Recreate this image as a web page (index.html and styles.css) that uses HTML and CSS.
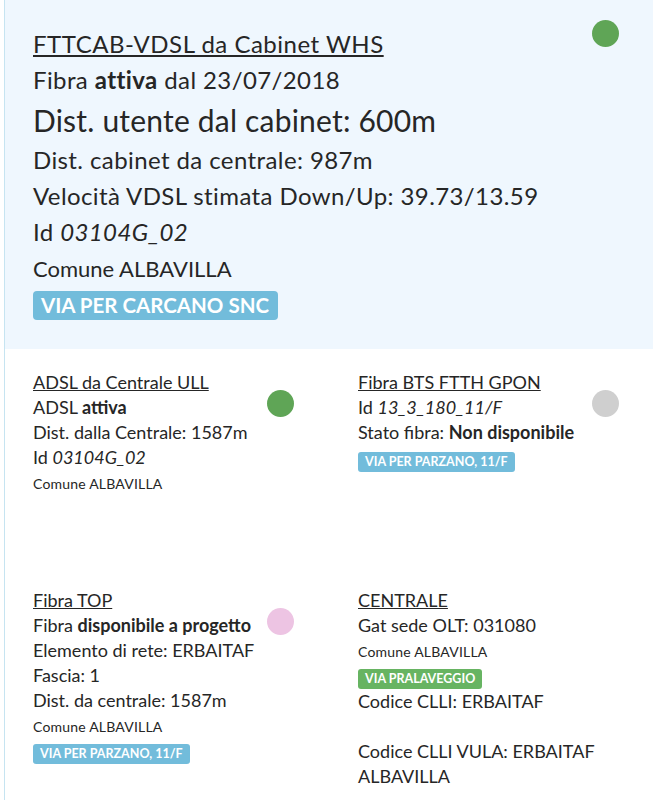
FILE: index.html
```html
<!DOCTYPE html>
<html lang="it">
<head>
    <meta charset="UTF-8">
    <title>Copertura</title>
    <link rel="stylesheet" href="styles.css">
</head>
<body>
    <div class="page">
        <div class="main-box">
            <div class="info">
                <div class="main-title">FTTCAB-VDSL da Cabinet WHS</div>
                <div class="main-line">Fibra <b>attiva</b> dal 23/07/2018</div>
                <div class="main-big">Dist. utente dal cabinet: 600m</div>
                <div class="main-line">Dist. cabinet da centrale: 987m</div>
                <div class="main-line">Velocità VDSL stimata Down/Up: 39.73/13.59</div>
                <div class="main-line">Id <i>03104G_02</i></div>
                <div class="main-comune">Comune ALBAVILLA</div>
                <span class="label label-big label-info">VIA PER CARCANO SNC</span>
            </div>
            <div class="dot dot-green"></div>
        </div>

        <div class="grid">
            <div class="cell">
                <div class="info">
                    <div class="cell-title">ADSL da Centrale ULL</div>
                    <div class="line">ADSL <b>attiva</b></div>
                    <div class="line">Dist. dalla Centrale: 1587m</div>
                    <div class="line">Id <i>03104G_02</i></div>
                    <div class="comune">Comune ALBAVILLA</div>
                </div>
                <div class="dot dot-green"></div>
            </div>
            <div class="cell">
                <div class="info">
                    <div class="cell-title">Fibra BTS FTTH GPON</div>
                    <div class="line">Id <i>13_3_180_11/F</i></div>
                    <div class="line">Stato fibra: <b>Non disponibile</b></div>
                    <span class="label label-info">VIA PER PARZANO, 11/F</span>
                </div>
                <div class="dot dot-grey"></div>
            </div>
            <div class="cell">
                <div class="info">
                    <div class="cell-title">Fibra TOP</div>
                    <div class="line">Fibra <b>disponibile a progetto</b></div>
                    <div class="line">Elemento di rete: ERBAITAF</div>
                    <div class="line">Fascia: 1</div>
                    <div class="line">Dist. da centrale: 1587m</div>
                    <div class="comune">Comune ALBAVILLA</div>
                    <span class="label label-info">VIA PER PARZANO, 11/F</span>
                </div>
                <div class="dot dot-pink"></div>
            </div>
            <div class="cell">
                <div class="info">
                    <div class="cell-title">CENTRALE</div>
                    <div class="line">Gat sede OLT: 031080</div>
                    <div class="comune">Comune ALBAVILLA</div>
                    <span class="label label-success">VIA PRALAVEGGIO</span>
                    <div class="line">Codice CLLI: ERBAITAF</div>
                    <div class="spacer"></div>
                    <div class="line">Codice CLLI VULA: ERBAITAF</div>
                    <div class="line">ALBAVILLA</div>
                </div>
            </div>
        </div>
    </div>
</body>
</html>
```

FILE: styles.css
```css
body {
    margin: 0;
    font-family: Lato, "Open Sans", sans-serif;
    color: #262626;
    background: #fff;
}
.page {
    margin-left: 4px;
    border-left: 1px solid #c6e4f1;
    min-height: 800px;
}
.main-box {
    display: flex;
    background-color: #eff7fe;
    padding: 20px 34px 29px 28px;
}
.info {
    flex: 1;
}
.main-box .info {
    padding-top: 6px;
}
.main-title {
    font-size: 24px;
    letter-spacing: 0.5px;
    line-height: 36px;
    text-decoration: underline;
}
.main-line {
    font-size: 24px;
    letter-spacing: 0.4px;
    line-height: 36px;
}
.main-big {
    font-size: 30px;
    letter-spacing: 0.2px;
    line-height: 44px;
}
.main-comune {
    font-size: 22px;
    line-height: 38px;
}
.dot {
    flex: none;
    width: 27px;
    height: 27px;
    border-radius: 50%;
}
.dot-green {
    background-color: #5fa556;
}
.dot-grey {
    background-color: #cfcfcf;
}
.dot-pink {
    background-color: #edc4e3;
}
.grid {
    display: grid;
    grid-template-columns: 261px 261px;
    column-gap: 64px;
    padding: 21px 0 0 28px;
}
.cell {
    display: flex;
    min-height: 218px;
}
.cell .dot {
    margin-top: 20px;
}
.cell-title {
    font-size: 18px;
    line-height: 25px;
    text-decoration: underline;
}
.line {
    font-size: 18px;
    line-height: 25px;
}
.comune {
    font-size: 14px;
    letter-spacing: 0.2px;
    line-height: 27px;
}
.spacer {
    height: 25px;
}
.label {
    display: block;
    width: fit-content;
    margin-top: 4px;
    color: #fff;
    font-weight: bold;
    font-size: 12.5px;
    line-height: 20px;
    padding: 0 7px;
    border-radius: 3px;
}
.line + .label {
    margin-top: 7px;
}
.label-big {
    margin-top: 3px;
    font-size: 20.5px;
    line-height: 29px;
    padding: 0 9px 0 8px;
    border-radius: 4px;
}
.label-info {
    background-color: #72bcdb;
}
.label-success {
    background-color: #67b462;
}
```
